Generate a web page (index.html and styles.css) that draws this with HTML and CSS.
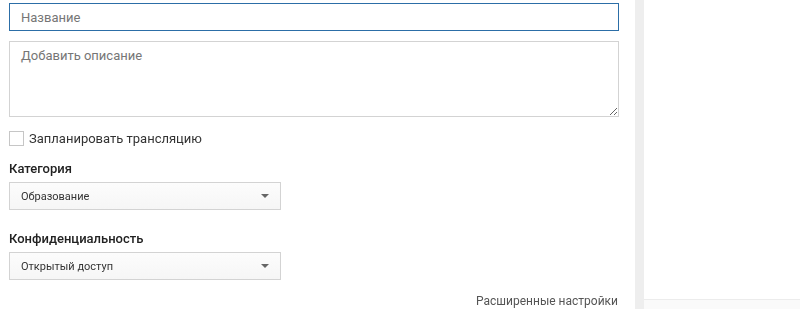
FILE: index.html
```html
<!DOCTYPE html>
<html lang="ru">
<head>
  <meta charset="UTF-8">
  <meta name="viewport" content="width=device-width, initial-scale=1.0">
  <title>Трансляция</title>
  <link rel="stylesheet" href="styles.css">
</head>
<body>

<div class="page">
  <div class="main">
    <input class="field title-field" type="text" placeholder="Название" autofocus>
    <textarea class="field desc-field" placeholder="Добавить описание"></textarea>

    <label class="check-row">
      <span class="check-box"></span>
      <span>Запланировать трансляцию</span>
    </label>

    <div class="section">
      <h3 class="section-title">Категория</h3>
      <div class="dropdown">
        <span>Образование</span>
        <span class="arrow"></span>
      </div>
    </div>

    <div class="section">
      <h3 class="section-title">Конфиденциальность</h3>
      <div class="dropdown">
        <span>Открытый доступ</span>
        <span class="arrow"></span>
      </div>
    </div>

    <div class="advanced">Расширенные настройки</div>
  </div>

  <div class="divider"></div>

  <div class="side">
    <div class="side-body"></div>
    <div class="side-foot"></div>
  </div>
</div>

</body>
</html>
```

FILE: styles.css
```css
body {
  font-family: Roboto, 'Liberation Sans', Arial, sans-serif;
  background-color: #fff;
  margin: 0;
  padding: 0;
}
.page {
  display: flex;
  height: 309px;
  overflow: hidden;
}
.main {
  width: 610px;
  padding: 3px 16px 0 9px;
  display: flex;
  flex-direction: column;
}
.field {
  box-sizing: border-box;
  width: 100%;
  margin: 0;
  font-family: inherit;
  font-size: 13px;
  color: #333;
  border: 1px solid #d3d3d3;
  background-color: #fff;
  outline: none;
  padding: 0 11px;
}
.field::placeholder {
  color: #767676;
}
.title-field {
  height: 28px;
  border-color: #2c6ea7;
}
.desc-field {
  height: 76px;
  margin-top: 10px;
  padding-top: 6px;
  resize: vertical;
}
.check-row {
  display: flex;
  align-items: center;
  margin-top: 14px;
  height: 15px;
  font-size: 13px;
  color: #333;
  cursor: pointer;
}
.check-box {
  box-sizing: border-box;
  width: 15px;
  height: 15px;
  border: 1px solid #c6c6c6;
  background-color: #fff;
  margin-right: 5px;
}
.section {
  margin-top: 15px;
}
.section + .section {
  margin-top: 21px;
}
.section-title {
  margin: 0 0 6px;
  font-size: 13px;
  font-weight: 500;
  color: #222;
  line-height: 15px;
}
.dropdown {
  box-sizing: border-box;
  width: 272px;
  height: 28px;
  display: flex;
  align-items: center;
  justify-content: space-between;
  padding: 0 11px 0 11px;
  border: 1px solid #d3d3d3;
  background: linear-gradient(#fcfcfc, #f6f6f6);
  font-size: 11px;
  color: #333;
  cursor: pointer;
}
.arrow {
  width: 0;
  height: 0;
  border-left: 4px solid transparent;
  border-right: 4px solid transparent;
  border-top: 4px solid #666;
}
.advanced {
  margin-top: 14px;
  text-align: right;
  font-size: 12px;
  color: #555;
  line-height: 14px;
  padding-right: 1px;
}
.divider {
  width: 9px;
  background-color: #eee;
}
.side {
  flex: 1;
  display: flex;
  flex-direction: column;
}
.side-body {
  height: 299px;
  background-color: #fff;
  border-bottom: 1px solid #ececec;
}
.side-foot {
  flex: 1;
  background-color: #fafafa;
}
```
